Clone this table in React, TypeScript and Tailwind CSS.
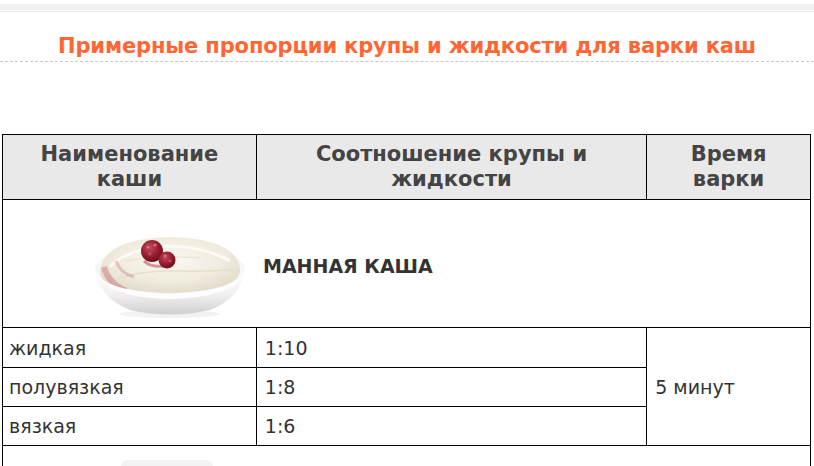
import React from "react";

function Bowl() {
  return (
    <svg width="160" height="104" viewBox="0 0 160 104">
      <defs>
        <radialGradient id="por" cx="50%" cy="40%" r="60%">
          <stop offset="0%" stopColor="#faf8f1" />
          <stop offset="65%" stopColor="#f0ebde" />
          <stop offset="100%" stopColor="#e3dccb" />
        </radialGradient>
        <linearGradient id="bowl" x1="0" y1="0" x2="0" y2="1">
          <stop offset="0%" stopColor="#ffffff" />
          <stop offset="55%" stopColor="#f1f1f1" />
          <stop offset="100%" stopColor="#cfcfcf" />
        </linearGradient>
        <radialGradient id="rb" cx="40%" cy="35%" r="65%">
          <stop offset="0%" stopColor="#c44a5c" />
          <stop offset="60%" stopColor="#981d31" />
          <stop offset="100%" stopColor="#6a0f1e" />
        </radialGradient>
      </defs>
      <ellipse cx="80" cy="99" rx="50" ry="4" fill="#ececec" opacity="0.7" />
      <path d="M5 54 Q8 82 40 95 Q80 104 120 95 Q152 82 155 54 Z" fill="url(#bowl)" />
      <ellipse cx="80" cy="54" rx="75" ry="25" fill="#f6f6f6" />
      <path d="M10 57 Q12 24 80 22 Q148 24 150 55 Q150 76 80 78 Q10 76 10 57 Z" fill="url(#por)" />
      <path d="M20 52 Q36 34 78 31 Q116 32 140 46" stroke="#fcfaf5" strokeWidth="3" fill="none" />
      <path d="M26 64 Q56 54 96 56 Q122 57 142 54" stroke="#e6dfcd" strokeWidth="1.5" fill="none" />
      <path d="M36 46 Q70 40 110 43" stroke="#e9e2d1" strokeWidth="1.2" fill="none" />
      <path d="M14 52 Q18 68 36 76" stroke="#c55a6d" strokeWidth="6" fill="none" opacity="0.4" />
      <path d="M26 46 Q30 58 44 62" stroke="#c55a6d" strokeWidth="3" fill="none" opacity="0.3" />
      <path d="M54 46 Q62 54 80 50" stroke="#b13349" strokeWidth="3" fill="none" opacity="0.5" />
      <path d="M5 54 Q10 82 80 84 Q150 82 155 54 Q150 76 80 79 Q10 76 5 54 Z" fill="#fdfdfd" />
      <circle cx="62" cy="36" r="11" fill="url(#rb)" />
      <circle cx="77" cy="45" r="8.5" fill="url(#rb)" />
      <circle cx="58" cy="32" r="1.6" fill="#d8717f" />
      <circle cx="65" cy="30" r="1.6" fill="#d8717f" />
      <circle cx="60" cy="39" r="1.4" fill="#c25768" />
      <circle cx="75" cy="41" r="1.4" fill="#d8717f" />
      <circle cx="80" cy="46" r="1.3" fill="#c25768" />
    </svg>
  );
}

export default function App() {
  const body = { fontFamily: "'DejaVu Sans', Verdana, sans-serif" };
  const head = { fontFamily: "'DejaVu Sans', Verdana, sans-serif" };
  const td = "border border-black px-[6px] text-[19px] leading-[22px] text-[#333]";
  const th = "border border-black text-[21px] leading-[25px] font-bold text-[#444] text-center px-1";
  return (
    <div className="w-[814px] h-[466px] overflow-hidden bg-white relative">
      <div className="h-[4px] bg-white" />
      <div className="h-[6px] bg-[#f0f0f0]" />
      <div className="h-[1px] bg-white" />
      <div className="h-[1px] bg-[#e6e6e6]" />
      <div className="pt-[21px] h-[50px] border-b border-dashed border-[#c8c8c8] flex justify-center">
        <h1
          className="text-[21px] leading-[26px] font-bold text-[#ff6633] tracking-[-0.15px]"
          style={{ fontFamily: "'DejaVu Sans', sans-serif" }}
        >
          Примерные пропорции крупы и жидкости для варки каш
        </h1>
      </div>
      <div className="h-[72px]" />
      <table className="ml-[2px] w-[809px] border-collapse text-[#333]">
        <colgroup>
          <col className="w-[254px]" />
          <col className="w-[391px]" />
          <col className="w-[164px]" />
        </colgroup>
        <thead>
          <tr className="h-[65px] bg-[#e9e9e9]">
            <th className={th} style={head}>
              Наименование<br />каши
            </th>
            <th className={th} style={head}>
              Соотношение крупы и<br />жидкости
            </th>
            <th className={th} style={head}>
              Время<br />варки
            </th>
          </tr>
        </thead>
        <tbody>
          <tr className="h-[128px]">
            <td colSpan={3} className="border border-black p-0">
              <div className="flex items-center">
                <div className="w-[258px] pl-[87px] pt-[6px] flex">
                  <Bowl />
                </div>
                <span className="text-[19px] font-bold text-[#333] pl-[2px] pt-[5px]" style={{ fontFamily: "'DejaVu Sans', sans-serif" }}>
                  МАННАЯ КАША
                </span>
              </div>
            </td>
          </tr>
          <tr className="h-[40px]">
            <td className={td} style={body}>жидкая</td>
            <td className={`${td} !px-[8px]`} style={body}>1:10</td>
            <td rowSpan={3} className={`${td} !px-[8px]`} style={body}>5 минут</td>
          </tr>
          <tr className="h-[39px]">
            <td className={td} style={body}>полувязкая</td>
            <td className={`${td} !px-[8px]`} style={body}>1:8</td>
          </tr>
          <tr className="h-[39px]">
            <td className={td} style={body}>вязкая</td>
            <td className={`${td} !px-[8px]`} style={body}>1:6</td>
          </tr>
          <tr className="h-[40px]">
            <td colSpan={3} className="border border-black p-0 align-top">
              <div className="ml-[118px] mt-[14px] w-[92px] h-[6px] rounded-t-full bg-[#f3f3f3]" />
            </td>
          </tr>
        </tbody>
      </table>
    </div>
  );
}
